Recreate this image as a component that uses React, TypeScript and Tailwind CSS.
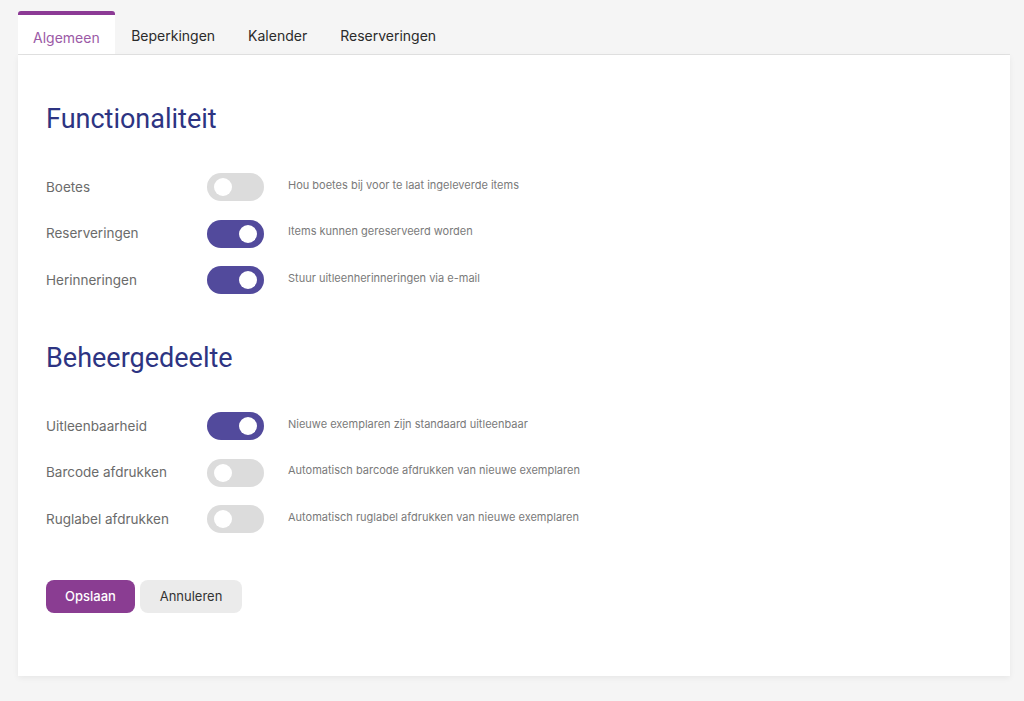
import React from 'react';

const tabs = ['Algemeen', 'Beperkingen', 'Kalender', 'Reserveringen'];

type Setting = { label: string; on: boolean; hint: string };

const functionaliteit: Setting[] = [
    { label: 'Boetes', on: false, hint: 'Hou boetes bij voor te laat ingeleverde items' },
    { label: 'Reserveringen', on: true, hint: 'Items kunnen gereserveerd worden' },
    { label: 'Herinneringen', on: true, hint: 'Stuur uitleenherinneringen via e-mail' },
];

const beheer: Setting[] = [
    { label: 'Uitleenbaarheid', on: true, hint: 'Nieuwe exemplaren zijn standaard uitleenbaar' },
    { label: 'Barcode afdrukken', on: false, hint: 'Automatisch barcode afdrukken van nieuwe exemplaren' },
    { label: 'Ruglabel afdrukken', on: false, hint: 'Automatisch ruglabel afdrukken van nieuwe exemplaren' },
];

const Toggle = ({ on }: { on: boolean }) => (
    <div
        className={`flex h-[28px] w-[57px] shrink-0 items-center rounded-full px-[7px] ${
            on ? 'justify-end bg-[#524a9c]' : 'justify-start bg-[#dcdcdc]'
        }`}
    >
        <div className="h-[18px] w-[18px] rounded-full bg-white"></div>
    </div>
);

const Section = ({ title, rows }: { title: string; rows: Setting[] }) => (
    <section>
        <h2 className="font-['Roboto',sans-serif] text-[27px] leading-[28px] text-[#2d3482]">{title}</h2>
        <div className="mt-[40px] flex flex-col gap-[18.5px]">
            {rows.map(row => (
                <div key={row.label} className="flex h-[28px] items-center">
                    <div className="w-[161px] text-[13.5px] text-[#6b6b6b]">{row.label}</div>
                    <Toggle on={row.on} />
                    <div className="ml-[24px] -mt-[4px] text-[11px] text-[#7a7a7a]">{row.hint}</div>
                </div>
            ))}
        </div>
    </section>
);

export default function App() {
    return (
        <div className="min-h-[701px] bg-[#f5f5f5] pt-[11px] pl-[18px] pr-[14px] font-['Inter',sans-serif]">
            {/* Tabs */}
            <div className="flex h-[44px] items-stretch border-b border-[#e2e2e2]">
                {tabs.map((tab, i) => (
                    <div
                        key={tab}
                        className={`flex items-center pt-[6px] text-[14px] ${
                            i === 0
                                ? 'rounded-t-[3px] border-t-[4px] border-[#8c3a95] bg-white px-[15px] pt-[2px] text-[#9b5aa6]'
                                : 'px-[16.5px] text-[#2b2b2b]'
                        }`}
                    >
                        {tab}
                    </div>
                ))}
            </div>

            {/* Card */}
            <div className="h-[621px] bg-white px-[28px] pt-[50px] shadow-[0_2px_6px_rgba(0,0,0,0.06)]">
                <Section title="Functionaliteit" rows={functionaliteit} />
                <div className="h-[50px]"></div>
                <Section title="Beheergedeelte" rows={beheer} />

                <div className="mt-[47px] flex gap-[5px]">
                    <button className="h-[33px] w-[89px] rounded-[8px] bg-[#8a3d92] text-[13px] font-medium text-white">
                        Opslaan
                    </button>
                    <button className="h-[33px] w-[102px] rounded-[8px] bg-[#ebebeb] text-[13px] text-[#333]">
                        Annuleren
                    </button>
                </div>
            </div>
        </div>
    );
}
